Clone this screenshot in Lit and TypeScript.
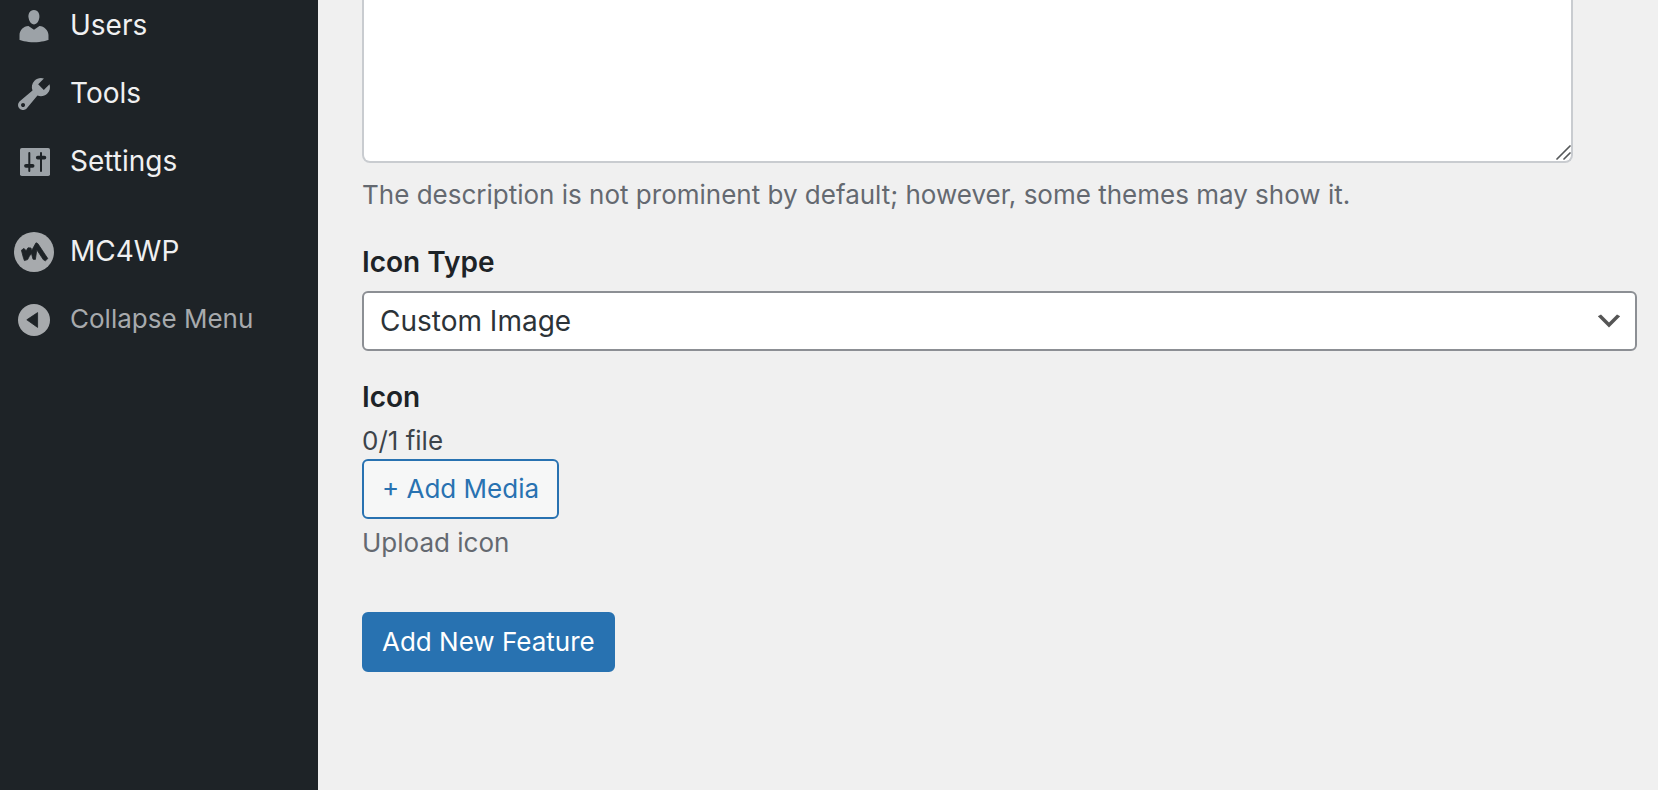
import { LitElement, html, css, svg } from "lit";
import { customElement, property } from "lit/decorators.js";

const icons = {
  users: svg`<path d="M10 9.25c-2.27 0-2.73-3.44-2.73-3.44C7 4.02 7.82 2 9.97 2c2.16 0 2.98 2.02 2.71 3.81 0 0-.41 3.44-2.68 3.44zm0 2.57L12.72 10c2.39 0 4.52 2.33 4.52 4.53v2.49s-3.65 1.13-7.24 1.13c-3.65 0-7.24-1.13-7.24-1.13v-2.49c0-2.25 1.94-4.48 4.47-4.48z"/>`,
  tools: svg`<path fill-rule="evenodd" d="M16.68 9.77c-1.34 1.34-3.3 1.67-4.95.99l-5.41 6.52c-.99.99-2.59.99-3.58 0s-.99-2.59 0-3.57l6.52-5.42c-.68-1.65-.35-3.61.99-4.95 1.28-1.28 3.12-1.62 4.72-1.06l-2.89 2.89 2.82 2.82 2.86-2.87c.53 1.58.18 3.39-1.08 4.65zM3.81 16.21c.4.39 1.04.39 1.43 0 .4-.4.4-1.04 0-1.43-.39-.4-1.03-.4-1.43 0-.39.39-.39 1.03 0 1.43z"/>`,
  settings: svg`<rect x="3" y="3" width="15" height="14" rx="0.9"/>
    <g class="cut-line" stroke-width="1">
      <path d="M7.65 5.5v9M13.5 5.5v9"/>
      <path stroke-width="1.9" d="M6 11.9h3.3M11.9 7.8h3.3"/>
    </g>`,
  mc4wp: svg`<circle cx="10" cy="10" r="10"/>
    <path class="cut" d="M3.7 9.1L5 8.2l1.1 1.2L7 7.9l1.5.1.3 1.4L11 5.4l.9.4 5 7.5-1.2 1.1-1-.5-3.3-5-.7 4.8-1.2-.1-.8-3-1.1 1.7-.8 1.5-1.6.5-.6-1.8z"/>`,
  collapse: svg`<circle cx="10" cy="10" r="8"/>
    <path class="cut" d="M6.4 9.9L11.8 6.3v7.4z"/>`,
};

type IconName = keyof typeof icons;

@customElement("menu-icon")
export class MenuIcon extends LitElement {
  @property() name: IconName = "users";

  static styles = css`
    :host {
      display: block;
      width: 40px;
      height: 40px;
      flex: none;
    }
    .icon {
      display: block;
      width: 100%;
      height: 100%;
      fill: currentColor;
    }
    .cut {
      fill: #1e2327;
      stroke: #1e2327;
      stroke-width: 0.4;
      stroke-linejoin: round;
    }
    .cut-line {
      fill: none;
      stroke: #1e2327;
      stroke-linecap: round;
    }
  `;

  render() {
    return html`<svg class="icon" viewBox="0 0 20 20" aria-hidden="true">${icons[this.name]}</svg>`;
  }
}

@customElement("admin-menu")
export class AdminMenu extends LitElement {
  static styles = css`
    :host {
      display: block;
      overflow: hidden;
      background: #1e2327;
    }
    .menu {
      list-style: none;
      margin: -8px 0 0;
      padding: 0;
    }
    .separated {
      margin-top: 22px;
    }
    .item {
      box-sizing: border-box;
      display: flex;
      align-items: center;
      gap: 16px;
      width: 100%;
      height: 68px;
      padding: 0 14px;
      border: 0;
      background: none;
      color: #f0f0f1;
      font: 28px/36px Inter, "Liberation Sans", sans-serif;
      text-align: left;
      text-decoration: none;
      cursor: pointer;
    }
    .item menu-icon {
      color: #9ca2a7;
    }
    .item.collapse {
      color: #a7aaad;
      font-size: 26px;
    }
    .item.collapse menu-icon,
    .item.plugin menu-icon {
      color: #a7aaad;
    }
    .caption {
      padding-bottom: 2px;
    }
  `;

  render() {
    return html`
      <nav aria-label="Main menu">
        <ul class="menu">
          <li><a class="item" href="#users"><menu-icon name="users"></menu-icon><span class="caption">Users</span></a></li>
          <li><a class="item" href="#tools"><menu-icon name="tools"></menu-icon><span class="caption">Tools</span></a></li>
          <li><a class="item" href="#settings"><menu-icon name="settings"></menu-icon><span class="caption">Settings</span></a></li>
          <li class="separated">
            <a class="item plugin" href="#mc4wp"><menu-icon name="mc4wp"></menu-icon><span class="caption">MC4WP</span></a>
          </li>
          <li>
            <button class="item collapse" type="button">
              <menu-icon name="collapse"></menu-icon><span class="caption">Collapse Menu</span>
            </button>
          </li>
        </ul>
      </nav>
    `;
  }
}

@customElement("feature-form")
export class FeatureForm extends LitElement {
  static styles = css`
    :host {
      display: block;
      padding: 0 21px 40px 44px;
      color: #3c434a;
      font: 26px/36px Inter, "Liberation Sans", sans-serif;
    }
    .form,
    .field {
      display: flex;
      flex-direction: column;
      align-items: flex-start;
    }
    .area {
      position: relative;
      width: 95%;
    }
    .textarea {
      box-sizing: border-box;
      display: block;
      width: 100%;
      height: 163px;
      margin: 0;
      padding: 4px 16px;
      border: 2px solid #c9ccd0;
      border-top: 0;
      border-radius: 0 0 8px 8px;
      background: #fff;
      color: #2c3338;
      font: inherit;
      resize: none;
      outline: none;
    }
    .grip {
      position: absolute;
      right: 2px;
      bottom: 3px;
      width: 16px;
      height: 16px;
      fill: none;
      stroke: #55585a;
      stroke-width: 1.7;
      stroke-linecap: round;
      pointer-events: none;
    }
    .help {
      margin: 0;
      color: #646970;
    }
    .area + .help {
      margin-top: 14px;
    }
    .label {
      color: #1d2327;
      font-size: 28px;
      font-weight: 600;
    }
    .field {
      width: 100%;
      margin-top: 31px;
    }
    .field + .field {
      margin-top: 28px;
    }
    .select {
      box-sizing: border-box;
      width: 100%;
      height: 60px;
      margin-top: 11px;
      padding: 0 48px 0 16px;
      border: 2px solid #8c8f94;
      border-radius: 6px;
      appearance: none;
      background: #fff
        url("data:image/svg+xml,%3Csvg xmlns='http://www.w3.org/2000/svg' viewBox='0 0 20 20'%3E%3Cpath d='M5 6l5 5 5-5 2 1-7 7-7-7 2-1z' fill='%23555'/%3E%3C/svg%3E")
        no-repeat right 10px center / 32px 32px;
      color: #2c3338;
      font: 28px/36px Inter, "Liberation Sans", sans-serif;
    }
    .status {
      margin-top: 8px;
    }
    .button {
      box-sizing: border-box;
      height: 60px;
      padding: 0 18px;
      border: 2px solid #2872b1;
      border-radius: 6px;
      background: #f6f7f7;
      color: #2872b1;
      font: inherit;
      white-space: nowrap;
      cursor: pointer;
    }
    .button + .help {
      margin-top: 6px;
    }
    .primary {
      margin-top: 51px;
      background: #2872b1;
      color: #fff;
    }
  `;

  render() {
    return html`
      <form class="form" @submit=${(e: Event) => e.preventDefault()}>
        <div class="area">
          <textarea class="textarea" aria-label="Description" aria-describedby="description-help"></textarea>
          <svg class="grip" viewBox="0 0 16 16" aria-hidden="true">
            <path d="M2 15l13-13M9 15l6-6" />
          </svg>
        </div>
        <p class="help" id="description-help">
          The description is not prominent by default; however, some themes may show it.
        </p>
        <div class="field">
          <label class="label" for="icon-type">Icon Type</label>
          <select class="select" id="icon-type">
            <option selected>Custom Image</option>
          </select>
        </div>
        <div class="field" role="group" aria-labelledby="icon-label">
          <span class="label" id="icon-label">Icon</span>
          <span class="status">0/1 file</span>
          <button class="button" type="button">+ Add Media</button>
          <p class="help">Upload icon</p>
        </div>
        <button class="button primary" type="submit">Add New Feature</button>
      </form>
    `;
  }
}

@customElement("app-root")
export class AppRoot extends LitElement {
  static styles = css`
    :host {
      display: grid;
      grid-template-columns: 318px minmax(0, 1fr);
      min-height: 100vh;
      background: #f0f0f0;
    }
  `;

  render() {
    return html`<admin-menu></admin-menu><feature-form></feature-form>`;
  }
}
